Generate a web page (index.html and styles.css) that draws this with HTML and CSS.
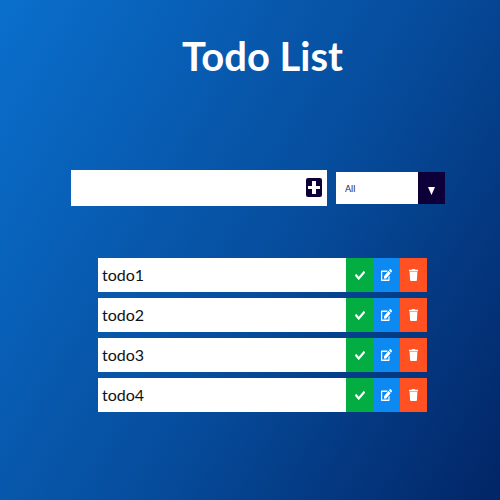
FILE: index.html
```html
<!DOCTYPE html>
<html lang="en">
<head>
<meta charset="utf-8">
<meta name="viewport" content="width=device-width, initial-scale=1">
<title>Todo List</title>
<link rel="stylesheet" href="styles.css">
</head>
<body>
<svg class="sprite" aria-hidden="true">
  <symbol id="check" viewBox="0 65 512 382" preserveAspectRatio="none"><path d="M174 439L7 273c-10-10-10-26 0-36l37-36c10-10 26-10 36 0l112 112L432 73c10-10 26-10 36 0l37 36c10 10 10 26 0 36L210 439c-10 10-26 10-36 0z"/></symbol>
  <symbol id="edit" viewBox="0 0 576 512" preserveAspectRatio="none"><path d="M402 83l91 91c4 4 4 10 0 14L273 408l-94 10c-12 2-23-9-21-21l10-94L388 83c4-4 10-4 14 0zM564 60l-48-48c-16-16-40-16-55 0l-36 35c-4 4-4 10 0 14l91 91c4 4 10 4 14 0l34-36c16-16 16-41 0-56zM384 346v102H64V128h230c3 0 6-1 8-4l40-40c8-7 3-20-8-20H48C22 64 0 86 0 112v352c0 27 22 48 48 48h352c27 0 48-21 48-48V306c0-11-13-16-20-8l-40 40c-3 2-4 5-4 8z"/></symbol>
  <symbol id="trash" viewBox="0 0 448 512" preserveAspectRatio="none"><path d="M432 32H312l-9-19a24 24 0 0 0-22-13H167a24 24 0 0 0-22 13l-9 19H16A16 16 0 0 0 0 48v32a16 16 0 0 0 16 16h416a16 16 0 0 0 16-16V48a16 16 0 0 0-16-16zM32 120l21 347a48 48 0 0 0 48 45h246a48 48 0 0 0 48-45l21-347z"/></symbol>
</svg>
<header><h1>Todo List</h1></header>
<main>
  <form class="entry">
    <div class="field">
      <input class="text" type="text" aria-label="New todo">
      <button class="add" type="submit" aria-label="Add todo"><svg viewBox="0 0 16 19"><rect class="plate" width="16" height="19" rx="2"/><path d="M6 3h4v5h4v3h-4v5H6v-5H2V8h4z"/></svg></button>
    </div>
    <div class="filter">
      <select aria-label="Filter todos"><option>All</option><option>Completed</option><option>Uncompleted</option></select>
      <span class="arrow" aria-hidden="true"><svg viewBox="0 0 7 8"><path d="M0 0h7L3.500 8z"/></svg></span>
    </div>
  </form>
  <ul class="todos">
    <li><span class="name">todo1</span><button class="done" aria-label="Complete todo1"><svg><use href="#check"/></svg></button><button class="edit" aria-label="Edit todo1"><svg><use href="#edit"/></svg></button><button class="remove" aria-label="Delete todo1"><svg><use href="#trash"/></svg></button></li>
    <li><span class="name">todo2</span><button class="done" aria-label="Complete todo2"><svg><use href="#check"/></svg></button><button class="edit" aria-label="Edit todo2"><svg><use href="#edit"/></svg></button><button class="remove" aria-label="Delete todo2"><svg><use href="#trash"/></svg></button></li>
    <li><span class="name">todo3</span><button class="done" aria-label="Complete todo3"><svg><use href="#check"/></svg></button><button class="edit" aria-label="Edit todo3"><svg><use href="#edit"/></svg></button><button class="remove" aria-label="Delete todo3"><svg><use href="#trash"/></svg></button></li>
    <li><span class="name">todo4</span><button class="done" aria-label="Complete todo4"><svg><use href="#check"/></svg></button><button class="edit" aria-label="Edit todo4"><svg><use href="#edit"/></svg></button><button class="remove" aria-label="Delete todo4"><svg><use href="#trash"/></svg></button></li>
  </ul>
</main>
</body>
</html>
```
FILE: styles.css
```css
* {
  box-sizing: border-box;
}

body {
  margin: 0;
  min-height: 100vh;
  padding: 32px 0 32px 25px;
  background: linear-gradient(120deg, #0a6fcc, #064c9c 55%, #022566);
  font-family: Lato, "Open Sans", sans-serif;
}

.sprite {
  display: none;
}

h1 {
  margin: 0 0 90px;
  color: #fff;
  font-size: 40px;
  line-height: 48px;
  font-weight: 700;
  text-align: center;
}

button,
select,
input {
  margin: 0;
  border: 0;
  border-radius: 0;
  font-family: inherit;
}

button {
  padding: 0;
  cursor: pointer;
}

.entry {
  display: flex;
  align-items: center;
  gap: 9px;
  margin: 0 55px 52px 46px;
}

.field {
  display: flex;
  flex: 1;
  min-width: 0;
  height: 36px;
  padding: 0 5px 2px 0;
  background: #fff;
}

.text {
  flex: 1;
  min-width: 0;
  padding: 0 8px;
  background: none;
  font-size: 16px;
  outline: 0;
}

.add {
  display: grid;
  place-items: center;
  background: none;
}

.add svg {
  width: 16px;
  height: 19px;
  fill: #fff;
}

.add .plate {
  fill: #0d0038;
}

.filter {
  position: relative;
  width: 109px;
}

select {
  display: block;
  width: 100%;
  height: 32px;
  padding: 0 36px 0 9px;
  appearance: none;
  background: #fff;
  color: #2a2050;
  font-size: 9px;
}

.arrow {
  position: absolute;
  inset: 0 0 0 auto;
  display: grid;
  place-items: center;
  width: 27px;
  padding-top: 6px;
  background: #0d0038;
  pointer-events: none;
}

.arrow svg {
  width: 7px;
  height: 8px;
  fill: #fff;
}

.todos {
  display: grid;
  gap: 6px;
  margin: 0 73px;
  padding: 0;
  list-style: none;
}

.todos li {
  display: flex;
  height: 34px;
  background: #fff;
}

.name {
  flex: 1;
  padding-left: 4px;
  color: #111;
  font-size: 16px;
  line-height: 34px;
}

.todos button {
  display: grid;
  place-items: center;
  width: 27px;
}

.todos svg {
  width: 11px;
  height: 12px;
  fill: #fff;
}

.todos .done svg {
  width: 10px;
  height: 9px;
}

.todos .remove svg {
  width: 9px;
}

.done {
  background: #04ad42;
}

.edit {
  background: #0d8af2;
}

.remove {
  background: #ff5121;
}
```
